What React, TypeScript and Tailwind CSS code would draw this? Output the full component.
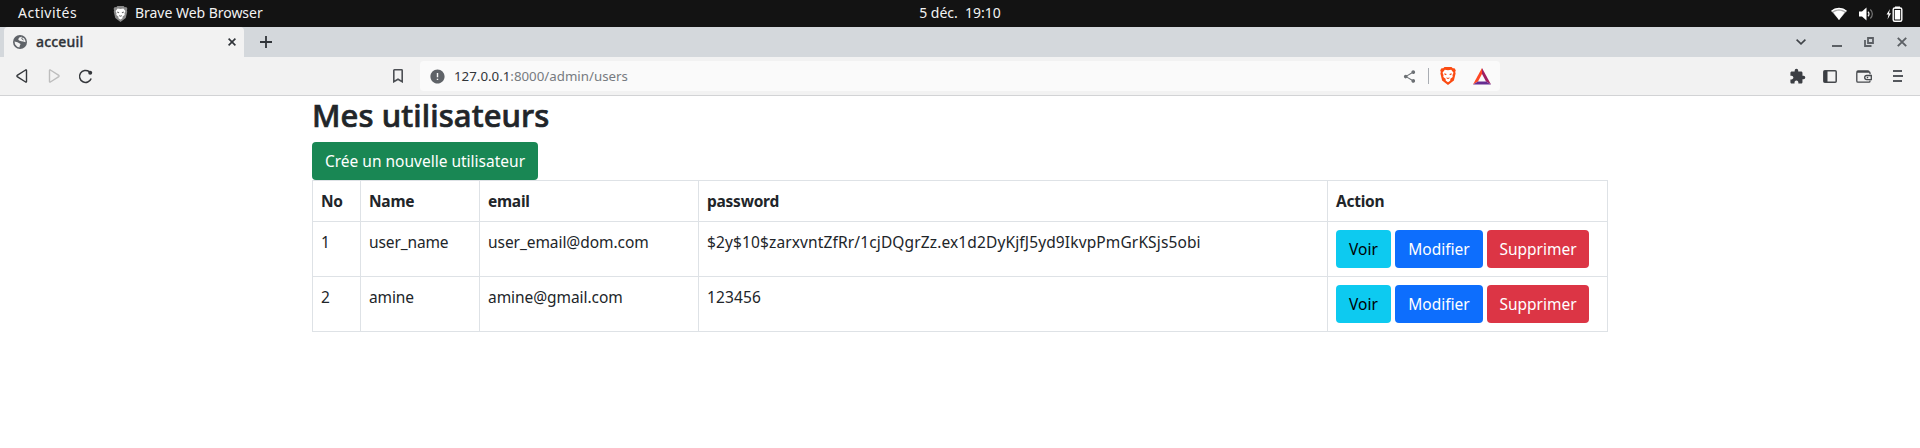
import React from 'react';
import { MdError, MdShare, MdExtension } from 'react-icons/md';

function SystemBar() {
  return (
    <header className="flex h-[27px] items-center bg-[#131313] text-[14px] leading-[25px] text-[#f2f2f2]">
      <div className="flex flex-1 items-center">
        <span className="ml-[18px] h-[27px] w-[95px] tracking-[0.5px]">Activités</span>
        <ShieldLion className="h-[16px] w-[15px] shrink-0" edge="#8a8a8a" face="#ffffff" line="#6a6a6a" />
        <span className="ml-[7px] h-[27px] tracking-[-0.03px]">Brave Web Browser</span>
      </div>
      <div className="h-[27px] whitespace-pre pl-[17px]">5 déc.  19:10</div>
      <div className="flex flex-1 items-center justify-end pr-[17px]">
        <svg className="h-[14px] w-[16px]" viewBox="0 0 16 14">
          <path d="M.5 4.200C4.500.4 11.500.4 15.500 4.200L8 13Z" fill="#aaa" />
          <path d="M2.500 5.500C5.500 3.200 10.500 3.200 13.500 5.500L8 13Z" fill="#fff" />
          <path d="M.5 4.200C4.500.6 11.500.6 15.500 4.200" fill="none" stroke="#fff" strokeWidth="1.300" />
        </svg>
        <svg className="ml-[12px] h-[14px] w-[15px]" viewBox="0 0 15 14">
          <path d="M0 4.500h3L7.500.5v13L3 9.500H0Z" fill="#fff" />
          <path d="M9 4.800c1.300 1.200 1.300 3.200 0 4.400" fill="none" stroke="#eee" strokeWidth="1.300" />
          <path d="M11.300 2.500c2.700 2.500 2.700 6.500 0 9" fill="none" stroke="#777" strokeWidth="1.200" />
        </svg>
        <svg className="ml-[12px] h-[16px] w-[17px]" viewBox="0 0 17 16">
          <path d="M4 3 .5 8.500h2L1.500 13.500 5 7.300H3Z" fill="#fff" />
          <path d="M9 .5h5v2H9z" fill="#fff" />
          <rect x="7.200" y="2" width="8.600" height="13.200" rx="1.500" fill="none" stroke="#fff" strokeWidth="1.400" />
          <rect x="8.800" y="4" width="5.400" height="9.500" fill="#fff" />
        </svg>
      </div>
    </header>
  );
}

type ShieldProps = { className: string; edge: string; face: string; line: string };

function ShieldLion({ className, edge, face, line }: ShieldProps) {
  return (
    <svg className={className} viewBox="0 0 16 18">
      <path d="M4.500 0h7l1.300 1.300 1.700-.1 1.300 2-.6 1.700.4 1.600-1.700 7L8 18 2.100 13.500.4 6.500.8 4.900.2 3.200l1.300-2 1.700.1Z" fill={edge} />
      <path d="M4.800 2.700 8 3.300l3.200-.6 2.300 3-1 2.400.2 2-2.300 1.700-.2 1.900L8 15.300l-2.200-1.600-.2-1.900-2.300-1.700.2-2-1-2.400Z" fill={face} />
      <path d="M4.300 6.300 6.700 7.100 6 8.200 4.400 7.500ZM11.700 6.300 9.300 7.100 10 8.200 11.600 7.500ZM6.400 10.200 8 11 9.600 10.200 9.300 11.400 8 12.100 6.700 11.400Z" fill={line} />
    </svg>
  );
}

function TabStrip() {
  return (
    <div className="flex h-[30px] items-center bg-[#d4d8dc] pl-1 text-[#303439]">
      <div className="flex h-full w-[240px] items-center rounded-t-[4px] bg-[#f2f2f2] pl-[9px] pr-2">
        <svg className="h-[14px] w-[14px]" viewBox="0 0 14 14">
          <circle cx="7" cy="7" r="7" fill="#5f6368" />
          <path d="M8.800 1.700 6.300 2.500 5.200 4.200 6 5.600 8.400 6.200 10.200 6.400 12.400 7.300 12.500 6 11.300 3.500ZM1.500 6.500 4.500 7.300 6.300 8.200 7.600 9 6.900 10.400 6.400 12.500 4.200 11.800 2 9.300Z" fill="#f2f2f2" />
          <path d="M9.400 1.800 8.800 4 10.600 5" fill="none" stroke="#5f6368" strokeWidth=".9" />
        </svg>
        <span className="ml-[9px] flex-1 text-[14px] font-medium leading-[30px] tracking-[0.2px] [-webkit-text-stroke:0.35px_#303439]">acceuil</span>
        <svg className="h-[8px] w-[8px]" viewBox="0 0 8 8">
          <path d="m.6.6 6.800 6.800m0-6.800L.6 7.400" stroke="#303439" strokeWidth="1.600" />
        </svg>
      </div>
      <svg className="ml-[16px] h-[12px] w-[12px]" viewBox="0 0 12 12">
        <path d="M6 0v12M0 6h12" stroke="#303439" strokeWidth="1.800" />
      </svg>
      <div className="ml-auto flex items-center pr-[13px]">
        <svg className="mr-[26px] h-[6px] w-[10px]" viewBox="0 0 10 6">
          <path d="m.6.6 4.400 4.300L9.400.6" fill="none" stroke="#404449" strokeWidth="1.600" />
        </svg>
        <svg className="mr-[22px] h-[10px] w-[10px]" viewBox="0 0 10 10">
          <path d="M0 9h10" stroke="#5c6065" strokeWidth="2" />
        </svg>
        <svg className="mr-[23px] h-[10px] w-[10px]" viewBox="0 0 10 10">
          <path d="M4 1h5v5H4zM1 3v6h6.500" fill="none" stroke="#5c6065" strokeWidth="1.800" />
        </svg>
        <svg className="h-[10px] w-[10px]" viewBox="0 0 10 10">
          <path d="m.8.8 8.400 8.400m0-8.400L.8 9.200" stroke="#5c6065" strokeWidth="1.900" />
        </svg>
      </div>
    </div>
  );
}

function Toolbar() {
  return (
    <div className="flex h-[39px] items-center border-b border-[#d2d3d5] bg-[#f2f2f2] text-[#3b3e43]">
      <div className="flex w-[420px] items-center">
        <svg className="ml-[16px] h-[14px] w-[12px]" viewBox="0 0 12 14">
          <path d="M10.500 1.300v11.400c-.1.500-.5.500-.9.300L1.200 7.600q-.6-.6 0-1.200L9.600 1c.4-.2.8-.2.900.3Z" fill="none" stroke="#34373b" strokeWidth="1.400" />
        </svg>
        <svg className="ml-[20px] h-[14px] w-[12px]" viewBox="0 0 12 14">
          <path d="M1.500 1.300v11.400c.1.500.5.500.9.300l8.400-5.400q.6-.6 0-1.200L2.400 1c-.4-.2-.8-.2-.9.300Z" fill="none" stroke="#bdbdbd" strokeWidth="1.400" />
        </svg>
        <svg className="ml-[18px] h-[15px] w-[15px]" viewBox="0 0 15 15">
          <path d="M11.300 2.700A6 6 0 1 0 13.200 9.500" fill="none" stroke="#34373b" strokeWidth="1.500" />
          <circle cx="12.200" cy="3.800" r="2" fill="#34373b" />
        </svg>
        <svg className="ml-auto mr-[17px] h-[14px] w-[10px]" viewBox="0 0 10 14">
          <path d="M.8 1.400q0-.6.600-.6h7.200q.6 0 .6.600v11.300L5 10.200.8 12.700Z" fill="none" stroke="#4c4f54" strokeWidth="1.600" />
        </svg>
      </div>
      <div className="flex h-[30px] w-[1080px] items-center rounded-[4px] bg-[#fafafa] pl-[9px] pr-[9px]">
        <MdError className="h-[17px] w-[17px] text-[#5f6368]" />
        <span className="ml-[8px] flex-1 text-[13.3px] leading-[30px] text-[#777b80]">
          <span className="text-[#303439]">127.0.0.1</span>:8000/admin/users
        </span>
        <MdShare className="h-[15px] w-[15px] text-[#6c7074]" />
        <div className="ml-[11px] h-[16px] w-px bg-[#a9adb3]" />
        <ShieldLion className="ml-[11px] h-[18px] w-[16px]" edge="#fb4b12" face="#ffffff" line="#fb4b12" />
        <svg className="ml-[17px] h-[17px] w-[18px]" viewBox="0 0 18 17">
          <path d="M9 0 0 16.500 5 13.500 9 6Z" fill="#ff4724" />
          <path d="M9 0v6l4 7.500 5 3Z" fill="#9e1f63" />
          <path d="M0 16.500h18l-5-3H5Z" fill="#662d91" />
        </svg>
      </div>
      <div className="ml-auto flex items-center pr-[17px]">
        <MdExtension className="mr-[17px] h-[17px] w-[17px] text-[#3b3e43]" />
        <svg className="mr-[19px] h-[13px] w-[14px]" viewBox="0 0 14 13">
          <rect x=".8" y=".8" width="12.400" height="11.400" rx="1" fill="none" stroke="#45484c" strokeWidth="1.500" />
          <path d="M1 1h3.500v11H1z" fill="#3b3e43" />
        </svg>
        <svg className="mr-[21px] h-[13px] w-[16px]" viewBox="0 0 16 13">
          <path d="M14 4.300V3q0-1-1-1H2Q.8 2 .8 3.200V11q0 1.200 1.200 1.200h11q1 0 1-1.200v-.6M1 1.900Q1 .8 2 .8h10q1 0 1 1" fill="none" stroke="#45484c" strokeWidth="1.300" />
          <path d="M15.300 5.500v4.200h-4.500a2.100 2.100 0 0 1 0-4.200Z" fill="#f2f2f2" stroke="#45484c" strokeWidth="1.300" />
          <circle cx="11.500" cy="7.600" r=".8" fill="#45484c" />
        </svg>
        <svg className="h-[12px] w-[10px]" viewBox="0 0 10 12">
          <path d="M0 1h9M0 6h10M0 11h9" stroke="#55585d" strokeWidth="1.800" />
        </svg>
      </div>
    </div>
  );
}

const users = [
  { id: 1, name: 'user_name', email: 'user_email@dom.com', password: '$2y$10$zarxvntZfRr/1cjDQgrZz.ex1d2DyKjfJ5yd9IkvpPmGrKSjs5obi' },
  { id: 2, name: 'amine', email: 'amine@gmail.com', password: '123456' },
];

const columns = ['No', 'Name', 'email', 'password', 'Action'];

function UsersTable() {
  const cell = 'border-b border-r border-[#dee2e6] p-2 text-left align-top';
  const button = 'h-[38px] rounded-[4px] text-center leading-[38px]';
  return (
    <table className="w-[1296px] table-fixed border-separate border-spacing-0 border-l border-t border-[#dee2e6]">
      <colgroup>
        <col className="w-[48px]" />
        <col className="w-[119px]" />
        <col className="w-[219px]" />
        <col className="w-[629px]" />
        <col className="w-[280px]" />
      </colgroup>
      <thead>
        <tr>
          {columns.map((label) => (
            <th key={label} className={`${cell} font-bold tracking-[-0.25px]`}>{label}</th>
          ))}
        </tr>
      </thead>
      <tbody>
        {users.map((user) => (
          <tr key={user.id} className="h-[55px]">
            <td className={cell}>{user.id}</td>
            <td className={`${cell} tracking-[-0.12px]`}>{user.name}</td>
            <td className={`${cell} tracking-[-0.06px]`}>{user.email}</td>
            <td className={`${cell} tracking-[0.13px]`}>{user.password}</td>
            <td className={cell}>
              <div className="flex gap-1">
                <button className={`${button} w-[55px] bg-[#0dcaf0] text-black`}>Voir</button>
                <button className={`${button} w-[88px] bg-[#0d6efd] text-white`}>Modifier</button>
                <button className={`${button} w-[102px] bg-[#dc3545] text-white`}>Supprimer</button>
              </div>
            </td>
          </tr>
        ))}
      </tbody>
    </table>
  );
}

export default function App() {
  return (
    <div className="h-[448px] w-[1920px] overflow-hidden bg-white font-['Noto_Sans',sans-serif]">
      <SystemBar />
      <TabStrip />
      <Toolbar />
      <main className="mx-auto w-[1296px] text-[15.5px] leading-6 text-[#212529]">
        <h2 className="mb-2 h-[38px] text-[31px] font-medium leading-[38px] tracking-[0.1px] [-webkit-text-stroke:0.7px_#212529]">Mes utilisateurs</h2>
        <button className="block h-[38px] w-[226px] rounded-[4px] bg-[#198754] text-center leading-[38px] text-white">
          Crée un nouvelle utilisateur
        </button>
        <UsersTable />
      </main>
    </div>
  );
}
